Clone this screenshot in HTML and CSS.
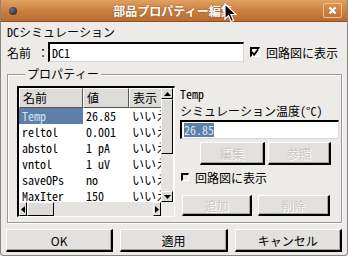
FILE: index.html
```html
<!DOCTYPE html>
<html lang="ja">
<head>
<meta charset="utf-8">
<link rel="stylesheet" href="styles.css">
</head>
<body>
<div class="window">
  <div class="titlebar">
    <span class="ticon"></span>
    <span class="title">部品プロパティー編集</span>
    <span class="close"><svg width="9" height="9" viewBox="0 0 9 9"><path d="M1.5 1.5 L7.5 7.5 M7.5 1.5 L1.5 7.5" stroke="#fff" stroke-width="2.2"/></svg></span>
  </div>
  <div class="body">
    <div class="heading">DCシミュレーション</div>
    <div class="name-row">
      <span class="name-label">名前 ：</span>
      <div class="input name-input">DC1</div>
      <div class="check"><span class="box"><svg width="9" height="9" viewBox="0 0 9 9"><path d="M1 4 L3.5 7 L8 1" stroke="#000" stroke-width="2" fill="none"/></svg></span>回路図に表示</div>
    </div>
    <fieldset class="group">
      <legend>プロパティー</legend>
      <div class="group-inner">
        <div class="table">
          <div class="table-main">
            <div class="grid">
              <div class="row head">
                <div class="c c1 hc">名前</div><div class="c c2 hc">値</div><div class="c c3 hc">表示</div>
              </div>
              <div class="row"><div class="c c1 sel">Temp</div><div class="c c2">26.85</div><div class="c c3">いいえ</div></div>
              <div class="row"><div class="c c1">reltol</div><div class="c c2">0.001</div><div class="c c3">いいえ</div></div>
              <div class="row"><div class="c c1">abstol</div><div class="c c2">1 pA</div><div class="c c3">いいえ</div></div>
              <div class="row"><div class="c c1">vntol</div><div class="c c2">1 uV</div><div class="c c3">いいえ</div></div>
              <div class="row"><div class="c c1">saveOPs</div><div class="c c2">no</div><div class="c c3">いいえ</div></div>
              <div class="row"><div class="c c1">MaxIter</div><div class="c c2">150</div><div class="c c3">いいえ</div></div>
            </div>
            <div class="vscroll">
              <div class="arrow"><svg width="7" height="4" viewBox="0 0 7 4"><path d="M0 4 L3.5 0 L7 4Z" fill="#000"/></svg></div>
              <div class="vthumb"></div>
              <div class="vtrack"></div>
              <div class="arrow"><svg width="7" height="4" viewBox="0 0 7 4"><path d="M0 0 L3.5 4 L7 0Z" fill="#000"/></svg></div>
            </div>
          </div>
          <div class="hscroll-row">
            <div class="hscroll">
              <div class="harrow"><svg width="4" height="7" viewBox="0 0 4 7"><path d="M4 0 L0 3.5 L4 7Z" fill="#000"/></svg></div>
              <div class="hthumb"></div>
              <div class="htrack"></div>
              <div class="harrow"><svg width="4" height="7" viewBox="0 0 4 7"><path d="M0 0 L4 3.5 L0 7Z" fill="#000"/></svg></div>
            </div>
            <div class="corner"></div>
          </div>
        </div>
        <div class="side">
          <div class="pname">Temp</div>
          <div class="pdesc">シミュレーション温度(°C)</div>
          <div class="input value-input"><span class="selected-text">26.85</span></div>
          <div class="btn-row1">
            <div class="btn disabled w65">編集</div>
            <div class="btn disabled w63">参照</div>
          </div>
          <div class="check side-check"><span class="box"></span>回路図に表示</div>
          <div class="btn-row2">
            <div class="btn disabled w70">追加</div>
            <div class="btn disabled w72">削除</div>
          </div>
        </div>
      </div>
    </fieldset>
    <div class="buttons">
      <div class="btn big">OK</div>
      <div class="btn big">適用</div>
      <div class="btn big">キャンセル</div>
    </div>
  </div>
  <svg class="cursor" width="13" height="20" viewBox="0 0 13 20"><path d="M1 1 L1 16 L4.5 12.5 L7 18.5 L9.5 17.5 L7 11.5 L12 11.5 Z" fill="#000" stroke="#fff" stroke-width="1.2"/></svg>
</div>
</body>
</html>
```

FILE: styles.css
```css
* { box-sizing: border-box; }
html, body { margin: 0; padding: 0; }
body {
  width: 348px;
  height: 256px;
  overflow: hidden;
  background: #ecebe8;
  font-family: "Noto Sans Mono CJK JP", "DejaVu Sans Mono", "Noto Sans CJK JP", monospace;
  font-size: 12px;
  color: #000;
}
.window {
  position: relative;
  width: 348px;
  height: 256px;
  display: flex;
  flex-direction: column;
  border-left: 1px solid #8a8782;
  border-right: 1px solid #8a8782;
  border-bottom: 1px solid #8a8782;
  border-radius: 0 0 4px 4px;
  background: #ecebe8;
}
.titlebar {
  height: 22px;
  flex: none;
  display: flex;
  align-items: center;
  background: linear-gradient(#e0a262, #cd8040 50%, #b86c2e);
  border-bottom: 1px solid #8e5121;
  padding: 0 5px 0 8px;
}
.ticon {
  width: 8px;
  height: 8px;
  border-radius: 50%;
  background: radial-gradient(circle at 35% 35%, #6b6f80, #1d1f2a);
  flex: none;
}
.title {
  flex: 1;
  text-align: center;
  color: #fff;
  font-family: "Noto Sans CJK JP", sans-serif;
  font-weight: bold;
  font-size: 12px;
  text-shadow: 0 0 2px #8a4a18;
  padding-left: 6px;
}
.close {
  width: 19px;
  height: 15px;
  flex: none;
  display: flex;
  align-items: center;
  justify-content: center;
  border: 1px solid #f2c08f;
  border-radius: 2px;
  background: linear-gradient(#d89152, #c07232);
}
.body {
  flex: 1;
  display: flex;
  flex-direction: column;
  padding: 0 5px 0 5px;
}
.heading {
  height: 18px;
  line-height: 18px;
  padding-left: 1px;
  margin-top: 1px;
}
.name-row {
  height: 22px;
  display: flex;
  align-items: center;
}
.name-label {
  width: 42px;
  padding-left: 1px;
  flex: none;
  white-space: nowrap;
}
.input {
  background: #fff;
  border-top: 2px solid #000;
  border-left: 2px solid #000;
  border-right: 1px solid #d8d6d2;
  border-bottom: 1px solid #d8d6d2;
  padding-left: 2px;
  display: flex;
  align-items: center;
}
.name-input {
  width: 196px;
  height: 20px;
  flex: none;
}
.check {
  display: flex;
  align-items: center;
  white-space: nowrap;
}
.name-row .check { margin-left: 6px; }
.box {
  width: 10px;
  height: 10px;
  border-top: 2px solid #000;
  border-left: 2px solid #000;
  border-right: 1px solid #fff;
  border-bottom: 1px solid #fff;
  background: #f4f3f1;
  margin-right: 6px;
  display: flex;
  align-items: center;
  justify-content: center;
  flex: none;
}
.box svg { margin-left: -1px; margin-top: -1px; }
.group {
  margin: 4px 0 0 1px;
  padding: 5px 4px 6px 9px;
  height: 156px;
  border: 1px solid #9a9894;
  box-shadow: 1px 1px 0 #fff, inset 1px 1px 0 #fff;
  min-width: 0;
}
.group legend {
  padding: 0 2px;
  margin-left: 8px;
  line-height: 14px;
  background: #ecebe8;
}
.group-inner {
  display: flex;
  height: 100%;
}
.table {
  width: 158px;
  height: 131px;
  flex: none;
  border-top: 2px solid #000;
  border-left: 2px solid #000;
  border-right: 1px solid #fff;
  border-bottom: 1px solid #fff;
  background: #fff;
  display: flex;
  flex-direction: column;
}
.table-main {
  height: 114px;
  display: flex;
}
.grid {
  width: 142px;
  overflow: hidden;
  flex: none;
}
.row {
  display: flex;
  height: 16px;
  white-space: nowrap;
}
.row.head { height: 20px; }
.c {
  flex: none;
  padding-left: 3px;
  line-height: 16px;
  overflow: hidden;
}
.c1 { width: 64px; }
.c2 { width: 46px; }
.c3 { width: 50px; }
.hc {
  line-height: 18px;
  background: #dcdbd8;
  border-top: 1px solid #fff;
  border-left: 1px solid #fff;
  border-right: 1px solid #555;
  border-bottom: 1px solid #555;
}
.sel {
  background: #5b7fa8;
  color: #d8e4f2;
}
.vscroll {
  width: 12px;
  flex: none;
  display: flex;
  flex-direction: column;
  background: #e4e3e0;
}
.arrow, .harrow {
  flex: none;
  display: flex;
  align-items: center;
  justify-content: center;
  background: #dcdbd8;
  border-top: 1px solid #fff;
  border-left: 1px solid #fff;
  border-right: 1px solid #000;
  border-bottom: 1px solid #000;
}
.arrow { height: 11px; }
.vthumb {
  height: 55px;
  flex: none;
  background: #dcdbd8;
  border-top: 1px solid #fff;
  border-left: 1px solid #fff;
  border-right: 1px solid #000;
  border-bottom: 1px solid #000;
}
.vtrack { flex: 1; }
.hscroll-row {
  height: 14px;
  display: flex;
}
.hscroll {
  width: 142px;
  display: flex;
  background: #e4e3e0;
}
.harrow { width: 8px; }
.hthumb {
  width: 27px;
  flex: none;
  background: #dcdbd8;
  border-top: 1px solid #fff;
  border-left: 1px solid #fff;
  border-right: 1px solid #000;
  border-bottom: 1px solid #000;
}
.htrack { flex: 1; }
.corner { flex: 1; background: #ecebe8; }
.side {
  margin-left: 5px;
  width: 159px;
  display: flex;
  flex-direction: column;
}
.pname {
  height: 16px;
  line-height: 16px;
}
.pdesc {
  height: 18px;
  line-height: 18px;
  white-space: nowrap;
}
.value-input {
  height: 19px;
  width: 159px;
}
.selected-text {
  background: #5b7fa8;
  color: #d8e4f2;
  line-height: 14px;
}
.btn {
  display: flex;
  align-items: center;
  justify-content: center;
  background: #e2e1df;
  border-top: 1px solid #fff;
  border-left: 1px solid #fff;
  border-right: 2px solid #000;
  border-bottom: 2px solid #000;
  box-shadow: inset -1px -1px 0 #a9a7a3;
}
.btn.disabled {
  color: #c9c7c3;
  text-shadow: 1px 1px 0 #fff;
  font-family: "Noto Sans CJK JP", sans-serif;
}
.btn-row1 {
  display: flex;
  gap: 3px;
  margin-top: 3px;
  padding-left: 20px;
  height: 23px;
  flex: none;
}
.w65 { width: 65px; }
.w63 { width: 63px; }
.w70 { width: 70px; }
.w72 { width: 72px; }
.side-check {
  height: 24px;
  padding-left: 1px;
  flex: none;
}
.side-check .box { width: 8px; height: 8px; background: #ecebe8; margin-right: 6px; }
.btn-row2 {
  display: flex;
  gap: 6px;
  height: 21px;
  margin-top: 6px;
  padding-left: 2px;
  flex: none;
}
.buttons {
  display: flex;
  gap: 7px;
  margin-top: 6px;
  height: 23px;
}
.btn.big {
  flex: 1;
  font-family: "Noto Sans CJK JP", sans-serif;
}
.cursor {
  position: absolute;
  left: 223px;
  top: 3px;
}
```
